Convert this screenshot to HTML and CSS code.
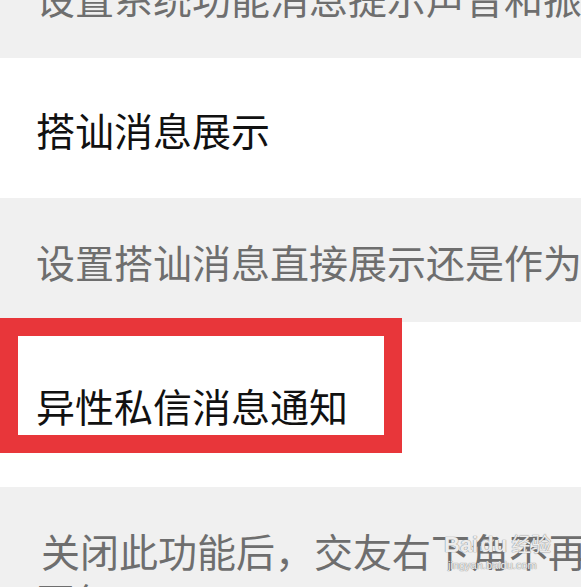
FILE: index.html
```html
<!DOCTYPE html>
<html lang="zh-CN">
<head>
    <meta charset="UTF-8">
    <meta name="viewport" content="width=device-width, initial-scale=1.0">
    <title>消息通知设置</title>
    <link rel="stylesheet" href="styles.css">
</head>
<body>
    <div class="settings">
        <div class="desc desc-top">设置系统功能消息提示声音和振动</div>
        <div class="item">搭讪消息展示</div>
        <div class="desc">设置搭讪消息直接展示还是作为通知</div>
        <div class="item item-marked">
            异性私信消息通知
            <span class="mark"></span>
        </div>
        <div class="desc desc-bottom">
            <span class="line first-line">关闭此功能后，交友右下角不再提示</span>
            <span class="line">回复</span>
        </div>
    </div>

    <div class="watermark">
        <div class="wm-logo">Bai<span class="paw">du</span><span class="wm-cn">经验</span></div>
        <div class="wm-url">jingyan.baidu.com</div>
    </div>
</body>
</html>
```

FILE: styles.css
```css
html, body {
    margin: 0;
    padding: 0;
    height: 100%;
    overflow: hidden;
}

body {
    font-family: "Noto Sans CJK SC", "Noto Sans", sans-serif;
    background-color: #f0f0f0;
    position: relative;
}

.settings {
    width: 581px;
    white-space: nowrap;
    overflow: hidden;
}

.desc {
    background-color: #f0f0f0;
    color: #6e6e6e;
    font-size: 39px;
    line-height: 50px;
    padding: 38px 0 36px 36px;
}

.desc-top {
    margin-top: -66px;
}

.desc-bottom {
    padding-bottom: 20px;
}

.line {
    display: block;
}

.first-line {
    padding-left: 5px;
}

.item {
    background-color: #fff;
    color: #111;
    font-size: 39px;
    line-height: 50px;
    padding: 46px 0 44px 36px;
}

.item-marked {
    position: relative;
    padding: 58px 0 57px 36px;
}

.mark {
    position: absolute;
    left: 0;
    top: -4px;
    width: 366px;
    height: 99px;
    border: 18px solid #e8363a;
}

.watermark {
    position: absolute;
    left: 444px;
    top: 531px;
    color: rgba(255, 255, 255, 0.85);
    text-shadow: 0 0 1px #8a8a8a, 0 0 1px #8a8a8a;
    font-family: "Liberation Sans", Arial, sans-serif;
}

.wm-logo {
    font-size: 22px;
    font-weight: bold;
    line-height: 26px;
}

.paw {
    margin-left: 2px;
}

.wm-cn {
    font-family: "Noto Sans CJK SC", sans-serif;
    font-weight: normal;
    font-size: 20px;
    margin-left: 4px;
}

.wm-url {
    font-size: 11px;
    line-height: 14px;
    padding-left: 4px;
}
```
